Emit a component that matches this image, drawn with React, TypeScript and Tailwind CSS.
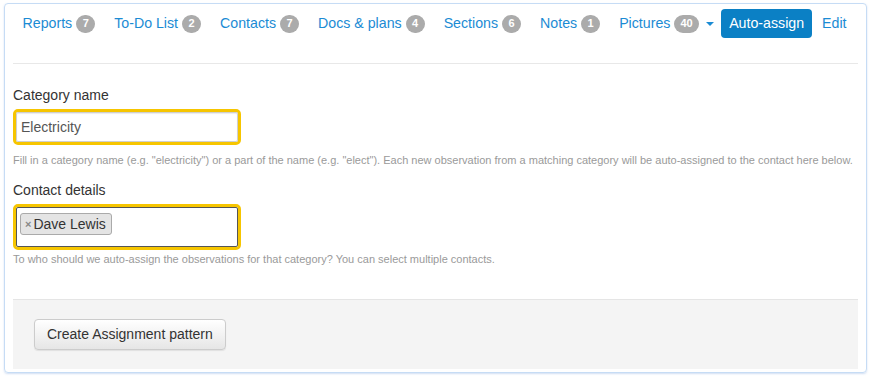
import React from 'react';

type Tab = { label: string; count?: number; caret?: boolean };

const tabs: Tab[] = [
  { label: 'Reports', count: 7 },
  { label: 'To-Do List', count: 2 },
  { label: 'Contacts', count: 7 },
  { label: 'Docs & plans', count: 4 },
  { label: 'Sections', count: 6 },
  { label: 'Notes', count: 1 },
  { label: 'Pictures', count: 40, caret: true },
];

const Badge: React.FC<{ n: number }> = ({ n }) => (
  <span className="ml-[4px] inline-flex h-[18px] min-w-[19px] items-center justify-center rounded-full bg-[#ababab] px-[6px] text-[11px] font-bold leading-none text-white">
    {n}
  </span>
);

const App: React.FC = () => {
  return (
    <div className="h-[378px] w-[872px] bg-white pl-[4px] pr-[5px] pt-[3px] font-['Liberation_Sans',Arial,sans-serif]">
      <div className="h-[370px] rounded-[4px] border border-[#c6dcf5] px-[8px] shadow-[0_1px_2px_rgba(120,160,220,0.35)]">
        {/* tabs */}
        <div className="flex h-[60px] items-start border-b border-[#e8e8e8] pt-[5px]">
          <ul className="flex items-center whitespace-nowrap">
            {tabs.map((t) => (
              <li key={t.label} className="flex h-[29px] items-center px-[9.5px] text-[14.2px] text-[#1b8bd4]">
                {t.label}
                {t.count !== undefined && <Badge n={t.count} />}
                {t.caret && (
                  <span className="ml-[7px] inline-block h-0 w-0 border-x-[4px] border-t-[4px] border-x-transparent border-t-[#1b8bd4]" />
                )}
              </li>
            ))}
            <li className="ml-[-2px] flex h-[29px] items-center rounded-[4px] bg-[#0b80c5] px-[8px] text-[14.2px] text-white">
              Auto-assign
            </li>
            <li className="flex h-[29px] items-center px-[10px] text-[14.2px] text-[#1b8bd4]">Edit</li>
          </ul>
        </div>

        {/* form */}
        <div className="pt-[23px]">
          <label className="block text-[14px] leading-[17px] text-[#333]">Category name</label>
          <div className="mt-[5px] w-[228px] rounded-[5px] border-[3px] border-[#f6c500]">
            <div className="flex h-[30px] items-center rounded-[2px] border border-[#cfcfcf] bg-white px-[4px] text-[14px] text-[#555] shadow-[inset_0_1px_1px_rgba(0,0,0,0.08)]">
              Electricity
            </div>
          </div>
          <p className="mt-[9px] whitespace-nowrap text-[11px] leading-[13px] text-[#9a9a9a]">
            Fill in a category name (e.g. "electricity") or a part of the name (e.g. "elect"). Each new observation from a matching category will be auto-assigned to the contact here below.
          </p>

          <label className="mt-[15px] block text-[14px] leading-[17px] text-[#333]">Contact details</label>
          <div className="mt-[5px] w-[228px] rounded-[5px] border-[3px] border-[#f6c500]">
            <div className="h-[40px] rounded-[2px] border border-[#555] bg-white px-[3px] pt-[3px]">
              <span className="inline-flex h-[22px] items-center rounded-[3px] border border-[#aaa] bg-[#e4e4e4] pl-[4px] pr-[5px] text-[14px] text-[#333]">
                <span className="mr-[2px] text-[11px] font-bold text-[#888]">×</span>
                Dave Lewis
              </span>
            </div>
          </div>
          <p className="mt-[3px] whitespace-nowrap text-[11px] leading-[13px] text-[#9a9a9a]">
            To who should we auto-assign the observations for that category? You can select multiple contacts.
          </p>
        </div>

        {/* footer */}
        <div className="mt-[33px] h-[70px] border-t border-[#e5e5e5] bg-[#f4f4f4] pl-[21px] pt-[19px]">
          <button className="h-[31px] rounded-[4px] border border-[#ccc] bg-gradient-to-b from-white to-[#e6e6e6] px-[12px] text-[14px] text-[#333] shadow-[0_1px_1px_rgba(0,0,0,0.08)]">
            Create Assignment pattern
          </button>
        </div>
      </div>
    </div>
  );
};

export default App;
